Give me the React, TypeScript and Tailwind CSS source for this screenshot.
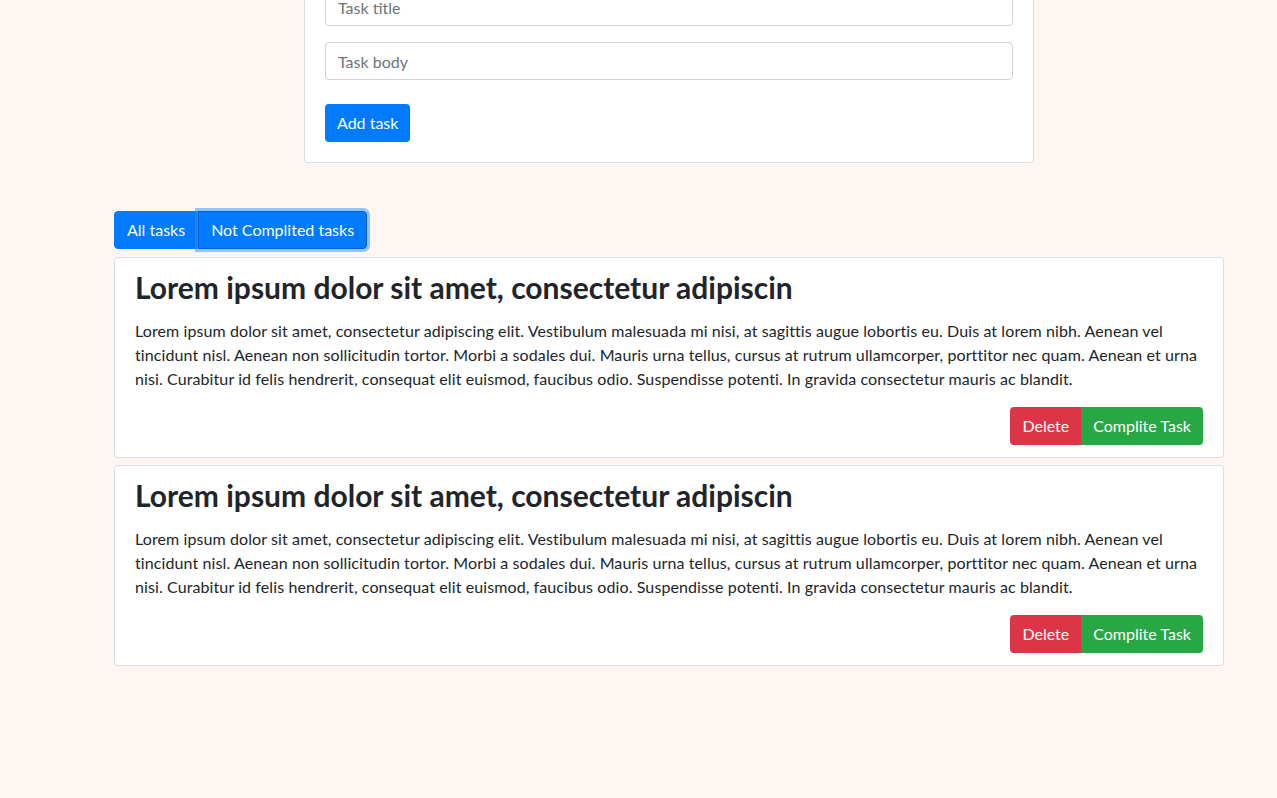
const body =
  "Lorem ipsum dolor sit amet, consectetur adipiscing elit. Vestibulum malesuada mi nisi, at sagittis augue lobortis eu. Duis at lorem nibh. Aenean vel tincidunt nisl. Aenean non sollicitudin tortor. Morbi a sodales dui. Mauris urna tellus, cursus at rutrum ullamcorper, porttitor nec quam. Aenean et urna nisi. Curabitur id felis hendrerit, consequat elit euismod, faucibus odio. Suspendisse potenti. In gravida consectetur mauris ac blandit.";

const tasks = [
  { id: 1, title: "Lorem ipsum dolor sit amet, consectetur adipiscin", body },
  { id: 2, title: "Lorem ipsum dolor sit amet, consectetur adipiscin", body },
];

function TaskCard({ title, text }: { title: string; text: string }) {
  return (
    <div className="bg-white border border-black/[0.125] rounded-[4px] px-5 pt-[11px] pb-3">
      <h3 className="text-[30px] font-bold leading-[1.2] text-[#212529] mb-[14px]">{title}</h3>
      <p className="text-base leading-6 text-[#212529] tracking-[0.1px]">{text}</p>
      <div className="flex justify-end mt-4">
        <button className="bg-[#dc3545] text-white px-3 h-[38px] rounded-l-[4px] text-base">Delete</button>
        <button className="bg-[#28a745] text-white px-3 h-[38px] rounded-r-[4px] text-base">Complite Task</button>
      </div>
    </div>
  );
}

export default function App() {
  return (
    <div
      className="min-h-screen bg-[#fef6f3] overflow-hidden"
      style={{ fontFamily: "Lato, 'Open Sans', sans-serif" }}
    >
      <div className="ml-[114px] w-[1110px] pb-[133px]">
        <div className="ml-[190px] w-[730px] -mt-[33px] bg-white border border-black/[0.125] rounded-[4px] p-5">
          <input
            placeholder="Task title"
            className="block w-full h-[38px] px-3 border border-[#ced4da] rounded-[4px] text-base placeholder:text-[#6c757d]"
          />
          <input
            placeholder="Task body"
            className="block w-full h-[38px] px-3 mt-4 border border-[#ced4da] rounded-[4px] text-base placeholder:text-[#6c757d]"
          />
          <button className="mt-6 bg-[#007bff] text-white px-3 h-[38px] rounded-[4px] text-base">Add task</button>
        </div>

        <div className="mt-[48px] flex">
          <button className="bg-[#007bff] text-white px-3 h-[38px] rounded-l-[4px] text-base border border-[#007bff]">
            All tasks
          </button>
          <button className="bg-[#007bff] text-white px-3 h-[38px] rounded-r-[4px] text-base border border-[#0062cc] shadow-[0_0_0_3px_rgba(38,143,255,0.5)]">
            Not Complited tasks
          </button>
        </div>

        <div className="mt-2 flex flex-col gap-[7px]">
          {tasks.map((t) => (
            <TaskCard key={t.id} title={t.title} text={t.body} />
          ))}
        </div>
      </div>
    </div>
  );
}
